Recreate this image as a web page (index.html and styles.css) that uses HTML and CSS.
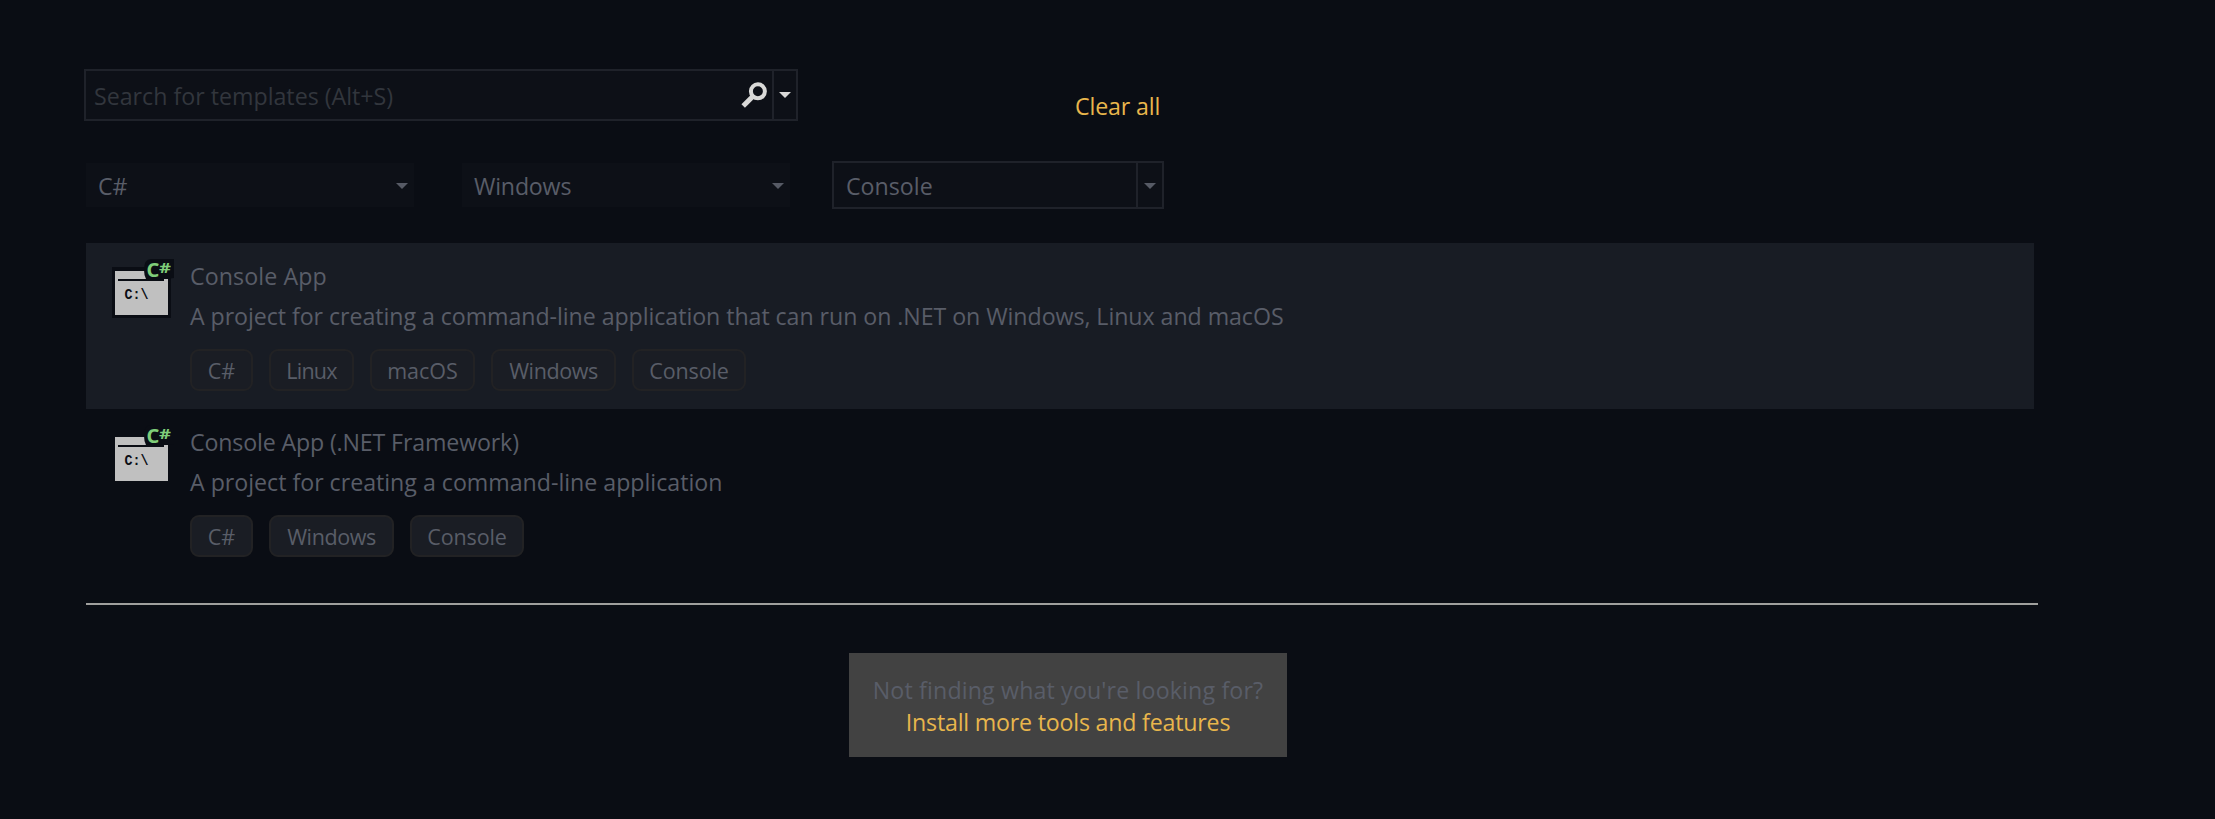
FILE: index.html
```html
<!DOCTYPE html>
<html lang="en">
<head>
<meta charset="utf-8">
<title>Create a new project</title>
<link rel="stylesheet" href="styles.css">
</head>
<body>
<main class="page">
  <header class="top">
    <div class="search">
      <span class="search-text">Search for templates (Alt+S)</span>
      <svg class="magnifier" width="28" height="28" viewBox="0 0 28 28"><circle cx="17.9" cy="10.3" r="7" fill="none" stroke="#d9d9d8" stroke-width="4"/><path d="M13 15.200L3.200 25" stroke="#d9d9d8" stroke-width="5"/></svg>
      <span class="drop search-drop"><svg width="12" height="6"><path d="M0 0H12L6 6Z" fill="#d9d9d8"/></svg></span>
    </div>
    <a class="link clear">Clear all</a>
  </header>

  <div class="filters">
    <div class="filter plain"><span>C#</span><svg width="12" height="6"><path d="M0 0H12L6 6Z" fill="#565a65"/></svg></div>
    <div class="filter plain second"><span class="windows-label">Windows</span><svg width="12" height="6"><path d="M0 0H12L6 6Z" fill="#565a65"/></svg></div>
    <div class="filter boxed"><span>Console</span><span class="drop filter-drop"><svg width="12" height="6"><path d="M0 0H12L6 6Z" fill="#565a65"/></svg></span></div>
  </div>

  <section class="templates">
    <article class="template selected">
      <svg class="icon" width="64" height="62" viewBox="0 0 64 62">
        <path d="M2 9H61V60H2Z" fill="#0a0d14"/>
        <path d="M5 13H58V57H5Z" fill="#c0c0c0"/>
        <path d="M8 21H54V23H8Z" fill="#0a0d14"/>
        <path d="M41 1H64V20L58 21H36Q34 17 34 12Q34 1 41 1Z" fill="#0a0d14"/>
        <text class="prompt" x="14.500" y="41" textLength="24" lengthAdjust="spacingAndGlyphs">C:\</text>
        <text class="lang" x="36.500" y="18.800">C</text><text class="lang hash" x="49" y="14.500" textLength="12" lengthAdjust="spacingAndGlyphs">#</text>
      </svg>
      <div class="info">
        <div class="line name">Console App</div>
        <div class="line desc">A project for creating a command-line application that can run on .NET on Windows, Linux and macOS</div>
        <div class="tags"><span class="tag csharp">C#</span><span class="tag linux">Linux</span><span class="tag macos">macOS</span><span class="tag windows">Windows</span><span class="tag console">Console</span></div>
      </div>
    </article>
    <article class="template">
      <svg class="icon" width="64" height="62" viewBox="0 0 64 62">
        <path d="M5 13H58V57H5Z" fill="#c0c0c0"/>
        <path d="M8 21H54V23H8Z" fill="#0a0d14"/>
        <path d="M41 1H64V20L58 21H36Q34 17 34 12Q34 1 41 1Z" fill="#0a0d14"/>
        <text class="prompt" x="14.500" y="41" textLength="24" lengthAdjust="spacingAndGlyphs">C:\</text>
        <text class="lang" x="36.500" y="18.800">C</text><text class="lang hash" x="49" y="14.500" textLength="12" lengthAdjust="spacingAndGlyphs">#</text>
      </svg>
      <div class="info">
        <div class="line name-long">Console App (.NET Framework)</div>
        <div class="line desc-short">A project for creating a command-line application</div>
        <div class="tags"><span class="tag csharp">C#</span><span class="tag windows">Windows</span><span class="tag console">Console</span></div>
      </div>
    </article>
  </section>

  <footer class="footer">
    <div class="more">
      <span class="question">Not finding what you're looking for?</span>
      <a class="link install">Install more tools and features</a>
    </div>
  </footer>
</main>
</body>
</html>
```
FILE: styles.css
```css
* { box-sizing: border-box; }
body {
  margin: 0;
  background: #0a0d14;
  color: #595d68;
  font: 23.2px/32px "Open Sans", "Noto Sans", sans-serif;
  white-space: nowrap;
}
svg { display: block; flex: none; overflow: visible; }
.page { height: 819px; padding: 69px 177px 0 84px; overflow: hidden; }

.top { display: flex; height: 92px; }
.search {
  display: flex;
  width: 714px;
  height: 52px;
  border: 2px solid #1f222a;
  background: #0d1017;
}
.search-text { flex: 1; padding: 9px 0 0 8px; color: #32363d; }
.magnifier { margin: 10px 4px 0 0; }
.drop { display: flex; justify-content: center; border-left: 2px solid #1f222a; }
.search-drop { width: 24px; padding-top: 21px; }
.link { color: #e8b64c; }
.clear { margin: 21px 0 0 277px; letter-spacing: -0.15px; }

.filters { display: flex; height: 82px; padding-left: 2px; }
.filter { display: flex; background: #0d1017; }
.plain {
  justify-content: space-between;
  align-items: center;
  width: 328px;
  height: 44px;
  margin-top: 2px;
  padding: 0 6px 0 12px;
}
.plain svg { margin-top: 2px; }
.plain span { padding-top: 2px; }
.second { margin: 2px 42px 0 48px; padding-left: 12px; }
.windows-label { letter-spacing: -0.2px; }
.boxed { justify-content: space-between; width: 332px; height: 48px; border: 2px solid #1f222a; }
.boxed > span:first-child { padding: 7px 0 0 12px; }
.filter-drop { width: 26px; padding-top: 20px; }

.templates { margin-left: 2px; padding-bottom: 28px; border-bottom: 2px solid #a0a09e; width: 1952px; }
.template { display: flex; width: 1948px; height: 166px; padding: 13px 0 0 24px; }
.selected { background: #181c24; }
.icon { margin: 2px 16px 0 0; }
.prompt { font: bold 15px "Liberation Mono", monospace; fill: #0a0d14; }
.lang { font: bold 20px "Noto Sans", sans-serif; fill: #7fcd79; }
.hash { font-size: 15px; }
.line { line-height: 40px; }
.name { letter-spacing: 0.1px; }
.name-long { letter-spacing: -0.15px; }
.desc { letter-spacing: -0.059px; }
.desc-short { letter-spacing: -0.015px; }
.tags { display: flex; gap: 16px; margin-top: 13px; }
.tag {
  height: 42px;
  border: 2px solid #222224;
  border-radius: 9px;
  background: #1a1d24;
  font-size: 21.5px;
  line-height: 39px;
  text-align: center;
}
.csharp { width: 63px; }
.linux { width: 85px; letter-spacing: -0.8px; }
.macos { width: 105px; }
.windows { width: 125px; letter-spacing: -0.4px; }
.console { width: 114px; letter-spacing: -0.15px; }

.footer { display: flex; justify-content: center; width: 1968px; padding-top: 48px; }
.more {
  display: flex;
  flex-direction: column;
  align-items: center;
  width: 438px;
  height: 104px;
  padding-top: 21px;
  background: #424242;
}
.question { letter-spacing: 0.15px; }
.install { letter-spacing: -0.2px; }
```
